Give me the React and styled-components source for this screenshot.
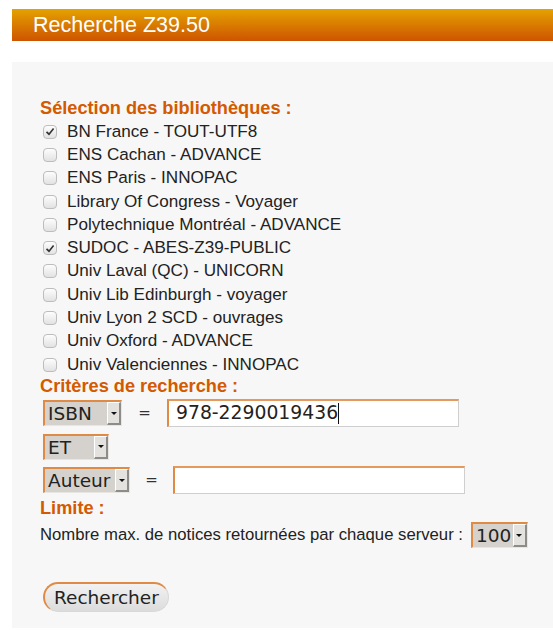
import styled, {createGlobalStyle} from 'styled-components';

const GlobalStyle = createGlobalStyle`
  body {
    margin: 0;
    background: #ffffff;
    font-family: "Liberation Sans", Arial, sans-serif;
    color: #222222;
  }
`;

const Header = styled.div`
  margin: 9px 0 0 12px;
  height: 32px;
  padding-left: 21px;
  display: flex;
  align-items: center;
  background: linear-gradient(#e4a200, #ce5400);
  color: #ffffff;
  font-size: 21.5px;
`;

const Panel = styled.div`
  margin: 21px 0 0 12px;
  padding: 36px 0 10px 28px;
  background: #f7f7f7;
  min-height: 520px;
`;

const SectionTitle = styled.div`
  color: #d35a00;
  font-weight: bold;
  font-size: 18.2px;
  line-height: 21px;
`;

const List = styled.div`
  display: flex;
  flex-direction: column;
  padding: 1px 0 0 3px;
`;

const CheckRow = styled.label`
  display: flex;
  align-items: center;
  height: 23.3px;
  font-size: 17.1px;
  gap: 10px;
`;

const Box = styled.span`
  width: 14px;
  height: 14px;
  box-sizing: border-box;
  border: 1px solid #bdbdbd;
  border-radius: 4px;
  background: linear-gradient(#fdfdfd, #e2e2e2);
  display: flex;
  align-items: center;
  justify-content: center;
`;

const Criteria = styled.div`
  display: flex;
  flex-direction: column;
  gap: 6.5px;
  padding: 2px 0 0 3px;
`;

const FieldRow = styled.div`
  display: flex;
  align-items: center;
`;

const Select = styled.div`
  width: ${(p) => p.$width}px;
  height: 26px;
  box-sizing: border-box;
  display: flex;
  background: #d5d2cd;
  border-top: 2px solid #e08b45;
  border-left: 2px solid #e08b45;
  border-right: 1px solid #e8e6e3;
  border-bottom: 1px solid #e8e6e3;
  font-family: "DejaVu Sans", sans-serif;
  font-size: 18.5px;
  color: #222222;
`;

const SelectText = styled.span`
  flex: 1;
  padding-left: 3px;
  line-height: 23px;
  overflow: hidden;
  white-space: nowrap;
`;

const Arrow = styled.span`
  width: 14px;
  flex-shrink: 0;
  box-sizing: border-box;
  background: #e4e2de;
  border-left: 1px solid #ffffff;
  border-top: 1px solid #ffffff;
  border-right: 2px solid #8e8c89;
  border-bottom: 2px solid #8e8c89;
  display: flex;
  align-items: center;
  justify-content: center;

  &::after {
    content: "";
    border-left: 3px solid transparent;
    border-right: 3px solid transparent;
    border-top: 3px solid #111111;
  }
`;

const Equals = styled.span`
  width: ${(p) => p.$width}px;
  text-align: center;
  font-family: "DejaVu Sans", sans-serif;
  font-size: 15px;
  color: #333333;
`;

const TextField = styled.div`
  width: ${(p) => p.$width}px;
  height: 28px;
  box-sizing: border-box;
  background: #ffffff;
  border-top: 2px solid #e49a5e;
  border-left: 2px solid #e08b45;
  border-right: 1px solid #cfcfcf;
  border-bottom: 1px solid #cfcfcf;
  font-family: "DejaVu Sans", sans-serif;
  font-size: 18.8px;
  line-height: 24px;
  padding-left: 7px;
  display: flex;
`;

const Caret = styled.span`
  width: 1px;
  height: 21px;
  margin-top: 2px;
  background: #111111;
`;

const LimitBlock = styled.div`
  padding-top: 4px;
`;

const LimitRow = styled.div`
  display: flex;
  align-items: center;
  gap: 8px;
  font-size: 16.7px;
  margin-top: 3px;
`;

const Button = styled.button`
  margin: 34px 0 0 3px;
  height: 30px;
  padding: 0 9px;
  border-radius: 15px;
  border: 1px solid #d8d8d8;
  border-top: 2px solid #e08b45;
  border-left: 2px solid #e08b45;
  background: linear-gradient(#f2f2f2, #dcdcdc);
  font-family: "DejaVu Sans", sans-serif;
  font-size: 18.5px;
  color: #222222;
`;

const libraries = [
    {name: 'BN France - TOUT-UTF8', checked: true},
    {name: 'ENS Cachan - ADVANCE'},
    {name: 'ENS Paris - INNOPAC'},
    {name: 'Library Of Congress - Voyager'},
    {name: 'Polytechnique Montréal - ADVANCE'},
    {name: 'SUDOC - ABES-Z39-PUBLIC', checked: true},
    {name: 'Univ Laval (QC) - UNICORN'},
    {name: 'Univ Lib Edinburgh - voyager'},
    {name: 'Univ Lyon 2 SCD - ouvrages'},
    {name: 'Univ Oxford - ADVANCE'},
    {name: 'Univ Valenciennes - INNOPAC'},
];

function Check({checked}) {
    return (
        <Box>
            {checked && (
                <svg width="10" height="9" viewBox="0 0 10 9">
                    <path d="M1.5 4.8 L4 7.2 L8.6 1.6" fill="none" stroke="#333" strokeWidth="1.6" />
                </svg>
            )}
        </Box>
    );
}

function FakeSelect({value, width}) {
    return (
        <Select $width={width}>
            <SelectText>{value}</SelectText>
            <Arrow />
        </Select>
    );
}

export default function App() {
    return (
        <>
            <GlobalStyle />
            <Header>Recherche Z39.50</Header>
            <Panel>
                <SectionTitle>Sélection des bibliothèques :</SectionTitle>
                <List>
                    {libraries.map((lib) => (
                        <CheckRow key={lib.name}>
                            <Check checked={lib.checked} />
                            {lib.name}
                        </CheckRow>
                    ))}
                </List>

                <SectionTitle>Critères de recherche :</SectionTitle>
                <Criteria>
                    <FieldRow>
                        <FakeSelect value="ISBN" width={79} />
                        <Equals $width={45}>=</Equals>
                        <TextField $width={292}>
                            978-2290019436<Caret />
                        </TextField>
                    </FieldRow>
                    <FieldRow>
                        <FakeSelect value="ET" width={66} />
                    </FieldRow>
                    <FieldRow>
                        <FakeSelect value="Auteur" width={87} />
                        <Equals $width={43}>=</Equals>
                        <TextField $width={292} />
                    </FieldRow>
                </Criteria>

                <LimitBlock>
                    <SectionTitle>Limite :</SectionTitle>
                    <LimitRow>
                        Nombre max. de notices retournées par chaque serveur :
                        <FakeSelect value="100" width={57} />
                    </LimitRow>
                </LimitBlock>

                <Button>Rechercher</Button>
            </Panel>
        </>
    );
}
